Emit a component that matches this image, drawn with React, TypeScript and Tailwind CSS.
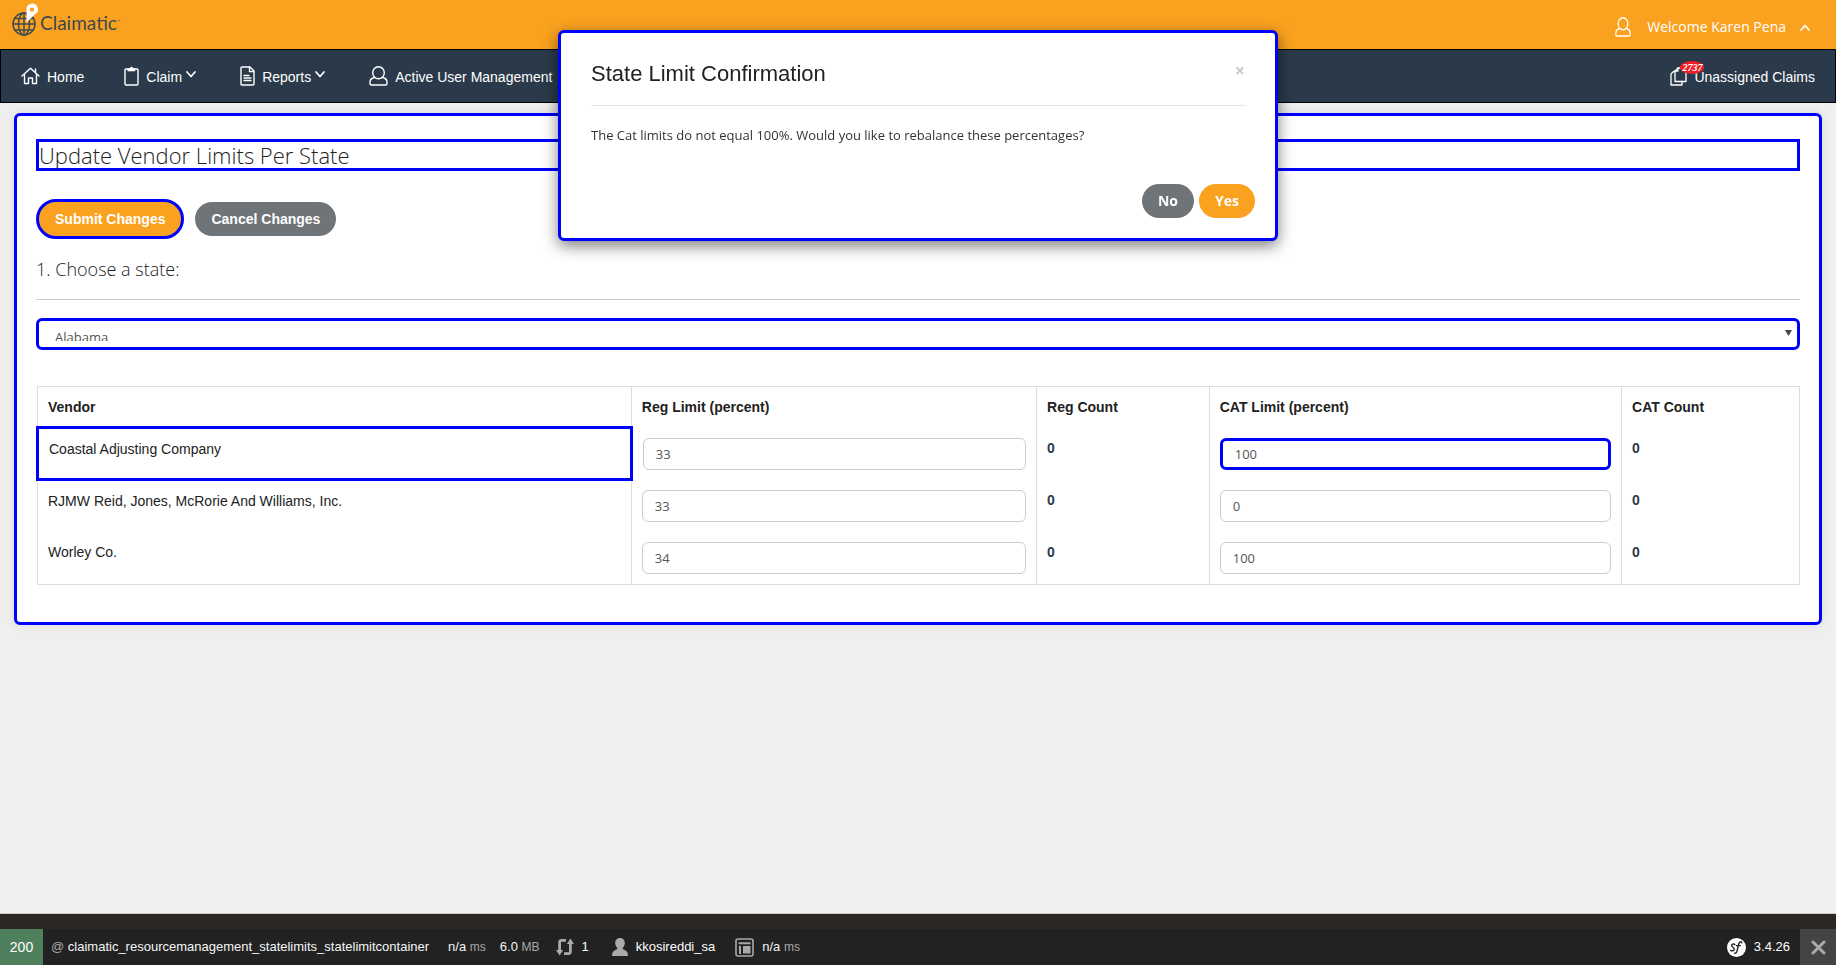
import type { ReactNode, SVGProps } from "react";

const vendors = [
  { name: "Coastal Adjusting Company", reg: "33", regCount: 0, cat: "100", catCount: 0, marked: true },
  { name: "RJMW Reid, Jones, McRorie And Williams, Inc.", reg: "33", regCount: 0, cat: "0", catCount: 0, marked: false },
  { name: "Worley Co.", reg: "34", regCount: 0, cat: "100", catCount: 0, marked: false },
];

function Line({ children, ...rest }: SVGProps<SVGSVGElement>) {
  return (
    <svg fill="none" stroke="currentColor" strokeLinejoin="round" strokeLinecap="round" aria-hidden="true" {...rest}>
      {children}
    </svg>
  );
}

function HomeIcon() {
  return (
    <Line viewBox="0 0 19 18" className="h-[18px] w-[19px]" strokeWidth="1.4">
      <path d="M1 9 9.5 1.2 18 9" />
      <path d="M3.5 7.5V16.5H7.5V11H11.5V16.5H15.5V7.5" />
      <path d="M14.5 2V5.5" />
    </Line>
  );
}

function ClipboardIcon() {
  return (
    <Line viewBox="0 0 15 20" className="h-5 w-[15px]" strokeWidth="1.4">
      <rect x="1" y="3" width="13" height="16" rx="1" />
      <path d="M4 2.6H6L7 1H8L9 2.6H11V5H4Z" fill="currentColor" strokeWidth="0.6" />
    </Line>
  );
}

function FileIcon() {
  return (
    <Line viewBox="0 0 15 20" className="h-5 w-[15px]" strokeWidth="1.4">
      <path d="M2 1H10L14 5V18Q14 19 13 19H2Q1 19 1 18V2Q1 1 2 1Z" />
      <path d="M9.5 1.2V5.5H13.8" />
      <path d="M4 9.5H9M4 12H11M4 14.5H11" strokeWidth="1.3" />
    </Line>
  );
}

function UserIcon({ className }: { className: string }) {
  return (
    <Line viewBox="0 0 19 20" preserveAspectRatio="none" className={className} strokeWidth="1.4">
      <ellipse cx="9.5" cy="6.8" rx="5.8" ry="6" />
      <path d="M5.5 11.5Q1 12.5 1 16V17.5Q1 19 2.5 19H16.5Q18 19 18 17.5V16Q18 12.5 13.5 11.5" />
    </Line>
  );
}

function CopyIcon() {
  return (
    <Line viewBox="0 0 17 19" className="h-[19px] w-[17px]" strokeWidth="1.3">
      <path d="M8 1H16V14.5H5V4Z" />
      <path d="M8 1V4H5" />
      <path d="M5 4.5H3.5L1 7V18H12V14.5" />
    </Line>
  );
}

function Chevron({ up = false }: { up?: boolean }) {
  return (
    <Line viewBox="0 0 10 7" className="h-[7px] w-[10px]" strokeWidth="1.7">
      <path d={up ? "M1 6 5 1.5 9 6" : "M1 1 5 5.5 9 1"} />
    </Line>
  );
}

function Logo() {
  return (
    <a href="#" className="flex items-center text-[#3e4a4f]" aria-label="Claimatic">
      <svg viewBox="0 0 28 34" className="h-[34px] w-7" fill="none" aria-hidden="true">
        <g stroke="#3e4a4f" strokeWidth="1.5">
          <circle cx="12" cy="22" r="11" />
          <ellipse cx="12" cy="22" rx="5.5" ry="11" />
          <path d="M12 11V33M1 22H23M3 16.5H21M3 28H21" />
        </g>
        <path d="M14.5 20.5V7.5A5.7 5.7 0 1 1 23 12.2Z" fill="#fff" />
        <circle cx="20" cy="7.6" r="2.2" fill="#faa21f" />
      </svg>
      <span className="pt-2 font-[Lato] text-[19px] leading-5">
        Claimatic<span className="align-super text-[4px] leading-none">™</span>
      </span>
    </a>
  );
}

function NavItem({ icon, children, menu }: { icon: ReactNode; children: ReactNode; menu?: boolean }) {
  return (
    <a href="#" className="flex items-center whitespace-nowrap">
      {icon}
      <span className="ml-[7px] pt-px">{children}</span>
      {menu && <span className="-mt-1 ml-1"><Chevron /></span>}
    </a>
  );
}

const field = "block h-8 w-full rounded-md bg-white px-3 font-['Open_Sans'] text-[13px] text-[#555] outline-none";
const value = "text-[#f5f5f5]";
const unit = "text-xs text-[#aaa]";

export default function App() {
  return (
    <div className="flex min-h-screen flex-col bg-[#efefef] font-['Liberation_Sans',sans-serif] text-sm text-[#222]">
      <header>
        <div className="flex h-[49px] items-start justify-between bg-[#faa21f] pr-[26px] pl-3">
          <div className="pt-[2px]"><Logo /></div>
          <button type="button" className="flex h-[54px] items-center font-['Open_Sans'] text-sm text-white">
            <UserIcon className="h-5 w-4" />
            <span className="ml-4">Welcome Karen Pena</span>
            <span className="ml-[14px]"><Chevron up /></span>
          </button>
        </div>
        <nav className="flex h-[54px] items-center justify-between border border-black bg-[#2a3a4a] px-5 text-white">
          <div className="flex items-center">
            <NavItem icon={<HomeIcon />}>Home</NavItem>
            <div className="ml-10"><NavItem icon={<ClipboardIcon />} menu>Claim</NavItem></div>
            <div className="ml-11"><NavItem icon={<FileIcon />} menu>Reports</NavItem></div>
            <div className="ml-11"><NavItem icon={<UserIcon className="h-5 w-[19px]" />}>Active User Management</NavItem></div>
          </div>
          <div className="relative">
            <NavItem icon={<CopyIcon />}>Unassigned Claims</NavItem>
            <span className="absolute -top-[5px] left-[10px] h-[13px] w-6 rounded-[50%] bg-[#ee1c25] text-center font-['Liberation_Serif'] text-[10px] leading-[13px] font-bold italic">
              2737
            </span>
          </div>
        </nav>
      </header>

      <main className="flex-1 px-[14px] py-[10px]">
        <section className="rounded-md border-[3px] border-[#0000ff] bg-white px-[19px] pt-[23px] pb-[37px] shadow-[0_0_10px_rgba(0,0,0,0.1)]">
          <h1 className="h-8 border-[3px] border-[#0000ff] font-['Open_Sans'] text-[22px] leading-[26px] font-light">
            Update Vendor Limits Per State
          </h1>
          <div className="mt-7 flex items-center gap-[11px] font-bold text-white">
            <button type="button" className="h-10 rounded-full border-[3px] border-[#0000ff] bg-[#faa21f] px-4">Submit Changes</button>
            <button type="button" className="h-[34px] rounded-full bg-[#6f7479] px-4">Cancel Changes</button>
          </div>
          <label htmlFor="state" className="mt-[18px] block border-b border-[#ccc] pb-[18px] font-['Open_Sans'] text-lg leading-6 font-light">
            1. Choose a state:
          </label>
          <div className="relative mt-[18px]">
            <select
              id="state"
              className="block h-8 w-full appearance-none rounded-md border-[3px] border-[#0000ff] bg-white px-4 py-[6px] font-['Open_Sans'] text-[13px] leading-5 text-[#555] outline-none"
            >
              <option>Alabama</option>
            </select>
            <svg viewBox="0 0 7 6" className="pointer-events-none absolute top-3 right-2 h-[6px] w-[7px]" fill="#444" aria-hidden="true">
              <path d="M0 0H7L3.5 6Z" />
            </svg>
          </div>

          <table className="mt-9 w-full table-fixed border-collapse border border-[#ddd] text-left">
            <colgroup>
              <col className="w-[33.7%]" />
              <col className="w-[23%]" />
              <col className="w-[9.8%]" />
              <col className="w-[23.4%]" />
              <col className="w-[10.1%]" />
            </colgroup>
            <thead>
              <tr className="align-top">
                {["Vendor", "Reg Limit (percent)", "Reg Count", "CAT Limit (percent)", "CAT Count"].map((h) => (
                  <th key={h} scope="col" className="border-x border-[#ddd] px-[10px] pt-[10px] pb-[9px] leading-5 font-bold">{h}</th>
                ))}
              </tr>
            </thead>
            <tbody>
              {vendors.map((v) => (
                <tr key={v.name} className="align-top">
                  <td className={v.marked ? "border-[3px] border-[#0000ff] p-[10px] leading-5" : "border-x border-[#ddd] p-[10px] leading-5"}>
                    {v.name}
                  </td>
                  <td className="border-x border-[#ddd] p-[10px]">
                    <input aria-label={`Reg limit for ${v.name}`} defaultValue={v.reg} className={`${field} border border-[#ccc]`} />
                  </td>
                  <td className="border-x border-[#ddd] p-[10px] leading-5 font-bold text-[#2a3a4a]">{v.regCount}</td>
                  <td className="border-x border-[#ddd] p-[10px]">
                    <input
                      aria-label={`CAT limit for ${v.name}`}
                      defaultValue={v.cat}
                      className={`${field} ${v.marked ? "border-[3px] border-[#0000ff]" : "border border-[#ccc]"}`}
                    />
                  </td>
                  <td className="border-x border-[#ddd] p-[10px] leading-5 font-bold text-[#2a3a4a]">{v.catCount}</td>
                </tr>
              ))}
            </tbody>
          </table>
        </section>
      </main>

      <footer className="border-t border-[#ccc] bg-[#2c2724] pt-[15px] text-[13px] text-white">
        <div className="flex h-9 items-center bg-[#222]">
          <span className="flex h-9 w-[43px] items-center justify-center bg-[#4f805d] text-sm">200</span>
          <span className="ml-2 text-[#aaa]">@ <span className={value}>claimatic_resourcemanagement_statelimits_statelimitcontainer</span></span>
          <span className="ml-[19px]"><span className={value}>n/a</span> <span className={unit}>ms</span></span>
          <span className="ml-[14px]"><span className={value}>6.0</span> <span className={unit}>MB</span></span>
          <svg viewBox="0 0 18 18" className="ml-4 size-[18px]" fill="none" stroke="#aaa" strokeWidth="2.8" aria-hidden="true">
            <path d="M10 2.4H5.5Q3.6 2.4 3.6 4.4V13M8 15.6H12.5Q14.4 15.6 14.4 13.6V5" />
            <path d="M0 12H7.2L3.6 17.5ZM10.8 6H18L14.4.5Z" fill="#aaa" stroke="none" />
          </svg>
          <span className="ml-2">1</span>
          <svg viewBox="0 0 16 18" className="ml-[23px] h-[18px] w-4" fill="#aaa" aria-hidden="true">
            <path d="M8 0C5 0 3.2 2.2 3.2 5 3.2 7 4 8.8 5.3 9.8 5.3 11.2 4.8 11.6 3 12.3 1 13.2 0 14.5 0 18H16C16 14.5 15 13.2 13 12.3 11.2 11.6 10.7 11.2 10.7 9.8 12 8.8 12.8 7 12.8 5 12.8 2.2 11 0 8 0Z" />
          </svg>
          <span className="ml-2">kkosireddi_sa</span>
          <svg viewBox="0 0 19 19" className="ml-5 size-[19px]" fill="none" stroke="#aaa" aria-hidden="true">
            <rect x="1" y="1" width="17" height="17" rx="2" strokeWidth="1.6" />
            <path d="M3.5 5.2H15.5M5 8V16" strokeWidth="2" />
            <path d="M8 8H15.5V15.5H8Z" fill="#aaa" stroke="none" />
          </svg>
          <span className="ml-2"><span className={value}>n/a</span> <span className={unit}>ms</span></span>
          <span className="ml-auto flex items-center">
            <svg viewBox="0 0 19 19" className="size-[19px]" aria-hidden="true">
              <circle cx="9.5" cy="9.5" r="9.5" fill="#fff" />
              <g fill="none" stroke="#222" strokeWidth="1.4" strokeLinecap="round">
                <path d="M7.8 6.6C6.6 5.4 4.3 6.3 4.7 7.9 5 9.2 7.3 9.4 7.3 11.2 7.2 12.9 4.7 13.4 3.7 12.2" />
                <path d="M14.8 4.8C14.2 3 12.3 3.7 11.6 6.4L10.2 12.4C9.7 14.6 8.9 15.6 7.6 15.1M9.4 7.6H13.4" />
              </g>
            </svg>
            <span className="mr-[10px] ml-2">3.4.26</span>
          </span>
          <button type="button" aria-label="Close toolbar" className="flex h-9 w-9 items-center justify-center bg-[#444]">
            <Line viewBox="0 0 15 15" className="size-[15px] text-[#aaa]" strokeWidth="3">
              <path d="M2 2 13 13M13 2 2 13" />
            </Line>
          </button>
        </div>
      </footer>

      <div className="pointer-events-none fixed inset-x-0 top-[30px] flex justify-center">
        <div
          role="dialog"
          aria-labelledby="dialog-title"
          className="pointer-events-auto w-[720px] rounded-md border-[3px] border-[#0000ff] bg-white px-[30px] pt-[27px] pb-5 shadow-[0_5px_15px_rgba(0,0,0,0.5)]"
        >
          <div className="flex items-start justify-between border-b border-[#e5e5e5] pb-[17px]">
            <h2 id="dialog-title" className="text-[22px] leading-7">State Limit Confirmation</h2>
            <button type="button" aria-label="Close" className="font-['Open_Sans'] text-lg leading-5 font-bold text-[#ccc]">×</button>
          </div>
          <p className="mt-[19px] font-['Open_Sans'] text-[13px] leading-5 text-[#333]">
            The Cat limits do not equal 100%. Would you like to rebalance these percentages?
          </p>
          <div className="-mr-[10px] mt-[39px] flex justify-end gap-[5px] font-['Open_Sans'] font-bold text-white">
            <button type="button" className="h-[34px] rounded-full bg-[#6f7479] px-4">No</button>
            <button type="button" className="h-[34px] rounded-full bg-[#faa21f] px-4">Yes</button>
          </div>
        </div>
      </div>
    </div>
  );
}
